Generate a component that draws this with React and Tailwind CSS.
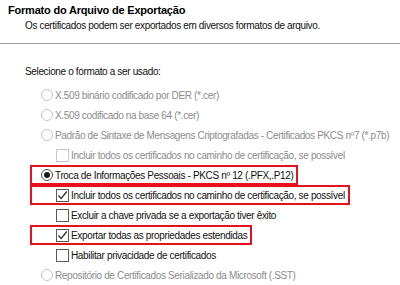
const font = { fontFamily: '"Liberation Sans", Arial, sans-serif' }

function Radio({ checked, disabled }) {
  return (
    <span
      className={`flex h-[12px] w-[12px] shrink-0 items-center justify-center rounded-full border bg-white ${
        disabled ? 'border-[#c4c4c4]' : 'border-[#4d4d4d]'
      }`}
    >
      {checked && <span className="h-[6px] w-[6px] rounded-full bg-[#1a1a1a]" />}
    </span>
  )
}

function Check({ checked, disabled }) {
  return (
    <span
      className={`flex h-[13px] w-[13px] shrink-0 items-center justify-center border bg-white ${
        disabled ? 'border-[#c8c8c8]' : 'border-[#5a5a5a]'
      }`}
    >
      {checked && (
        <svg width="11" height="11" viewBox="0 0 11 11">
          <path d="M1.5 5.5 L4.2 8.5 L9.8 1.5" fill="none" stroke="#333" strokeWidth="1.3" />
        </svg>
      )}
    </span>
  )
}

function Row({ kind, checked, disabled, indent, boxed, children }) {
  const Icon = kind === 'radio' ? Radio : Check
  return (
    <div
      className={`flex h-[20px] items-center ${boxed ? 'ml-[30px] w-fit border-2 border-[#e8101c] pr-[3px]' : ''}`}
      style={{ paddingLeft: boxed ? indent - 32 : indent }}
    >
      <Icon checked={checked} disabled={disabled} />
      <span className={`ml-[2px] whitespace-nowrap ${disabled ? 'text-[#8c8c8c]' : 'text-[#111]'}`}>
        {children}
      </span>
    </div>
  )
}

export default function App() {
  return (
    <div className="h-[285px] w-[400px] overflow-hidden bg-white text-[10px] tracking-[-0.35px]" style={font}>
      <div className="h-[44px] border-b border-[#a0a0a0] pt-[3px]">
        <p className="pl-[8px] text-[11px] font-bold leading-[15px] tracking-[-0.2px] text-black">
          Formato do Arquivo de Exportação
        </p>
        <p className="pl-[25px] leading-[15px] text-[#111]">
          Os certificados podem ser exportados em diversos formatos de arquivo.
        </p>
      </div>
      <div className="flex flex-col pt-[20px]">
        <p className="mb-[5px] pl-[25px] leading-[16px] text-[#111]">Selecione o formato a ser usado:</p>
        <Row kind="radio" disabled indent={41}>X.509 binário codificado por DER (*.cer)</Row>
        <Row kind="radio" disabled indent={41}>X.509 codificado na base 64 (*.cer)</Row>
        <Row kind="radio" disabled indent={41}>
          Padrão de Sintaxe de Mensagens Criptografadas - Certificados PKCS nº7 (*.p7b)
        </Row>
        <Row kind="check" disabled indent={56}>Incluir todos os certificados no caminho de certificação, se possível</Row>
        <Row kind="radio" checked indent={41} boxed>
          Troca de Informações Pessoais - PKCS nº 12 (.PFX,.P12)
        </Row>
        <Row kind="check" checked indent={56} boxed>
          Incluir todos os certificados no caminho de certificação, se possível
        </Row>
        <Row kind="check" indent={56}>Excluir a chave privada se a exportação tiver êxito</Row>
        <Row kind="check" checked indent={56} boxed>
          Exportar todas as propriedades estendidas
        </Row>
        <Row kind="check" indent={56}>Habilitar privacidade de certificados</Row>
        <Row kind="radio" disabled indent={41}>Repositório de Certificados Serializado da Microsoft (.SST)</Row>
      </div>
    </div>
  )
}
